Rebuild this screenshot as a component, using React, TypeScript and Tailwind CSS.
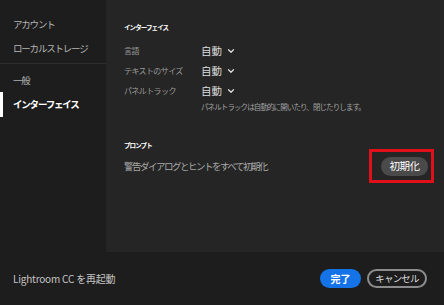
import { ChevronDown } from "lucide-react";

const jp = { fontFamily: '"Noto Sans CJK JP", "Noto Sans", sans-serif' };

function SideItem({ label, active }: { label: string; active?: boolean }) {
  return (
    <div className="relative h-[24px] flex items-center pl-[13px]">
      {active && <div className="absolute left-0 top-0 h-[25px] w-[3px] bg-white" />}
      <span
        className={`text-[9.5px] tracking-[-1.2px] ${active ? "text-white font-bold" : "text-[#b4b4b4]"}`}
      >
        {label}
      </span>
    </div>
  );
}

function SelectRow({ label }: { label: string }) {
  return (
    <div className="flex items-center h-[20px]">
      <span className="w-[77px] text-[8px] text-[#9a9a9a] tracking-[-0.6px]">{label}</span>
      <span className="text-[10.5px] text-[#dcdcdc]">自動</span>
      <ChevronDown className="ml-[4px] w-[10px] h-[10px] text-[#dcdcdc]" strokeWidth={3} />
    </div>
  );
}

export default function App() {
  return (
    <div className="w-[444px] h-[305px] bg-[#1d1d1d] flex flex-col overflow-hidden" style={jp}>
      <div className="flex h-[252px]">
        <div className="w-[106px] pt-[12px]">
          <SideItem label="アカウント" />
          <SideItem label="ローカルストレージ" />
          <div className="mt-[3px] mb-[4px] h-px bg-[#2c2c2c]" />
          <SideItem label="一般" />
          <SideItem label="インターフェイス" active />
        </div>
        <div className="flex-1 bg-[#252525] pl-[18px] pr-[16px] pt-[21px]">
          <div className="h-[12px] leading-[12px] text-[6.5px] font-bold text-white tracking-[-0.9px]">
            インターフェイス
          </div>
          <div className="mt-[8px]">
            <SelectRow label="言語" />
            <SelectRow label="テキストのサイズ" />
            <SelectRow label="パネルトラック" />
          </div>
          <div className="h-[12px] leading-[12px] pl-[77px] text-[7.5px] text-[#a0a0a0] tracking-[-0.9px]">
            パネルトラックは自動的に開いたり、閉じたりします。
          </div>
          <div className="mt-[26px] h-[12px] leading-[12px] text-[6.5px] font-bold text-white tracking-[-0.9px]">
            プロンプト
          </div>
          <div className="mt-[5px] h-[20px] flex items-center justify-between">
            <span className="text-[9.5px] text-[#a8a8a8] tracking-[-1.5px]">
              警告ダイアログとヒントをすべて初期化
            </span>
            <div className="relative">
              <div className="absolute left-[-12px] right-[-6px] top-[-8px] bottom-[-7px] border-[3px] border-[#e0101a]" />
              <button className="w-[47px] h-[19px] rounded-full bg-[#4a4a4a] text-[10.5px] text-white tracking-[-0.5px] flex items-center justify-center">
                初期化
              </button>
            </div>
          </div>
        </div>
      </div>
      <div className="flex-1 flex items-center justify-between pl-[13px] pr-[17px]">
        <span className="text-[10px] text-[#c4c4c4] tracking-[-0.2px]">Lightroom CC を再起動</span>
        <div className="flex items-center gap-[6px]">
          <button className="w-[41px] h-[19px] rounded-full bg-[#1473e6] text-white text-[10px] font-bold flex items-center justify-center">
            完了
          </button>
          <button className="w-[60px] h-[19px] rounded-full border-2 border-[#8c8c8c] text-[#dcdcdc] text-[9.5px] tracking-[-0.8px] flex items-center justify-center">
            キャンセル
          </button>
        </div>
      </div>
    </div>
  );
}
